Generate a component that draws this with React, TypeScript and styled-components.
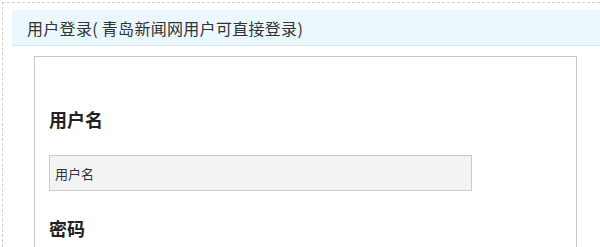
import React from 'react';
import styled, { createGlobalStyle } from 'styled-components';

const GlobalStyle = createGlobalStyle`
  html, body {
    margin: 0;
    padding: 0;
    background: #fff;
    font-family: "Noto Sans CJK SC", "Noto Sans", sans-serif;
  }
`;

const Frame = styled.div`
  margin: 2px 0 0 2px;
  border-top: 1px dashed #d0d0d0;
  border-left: 1px dashed #d0d0d0;
  padding: 7px 0 0 9px;
  height: 245px;
  box-sizing: border-box;
  overflow: hidden;
`;

const Header = styled.div`
  height: 35px;
  background: #eaf7fd;
  border-bottom: 1px solid #d6e9f1;
  padding-left: 15px;
  display: flex;
  align-items: center;
  font-size: 16px;
  color: #333;
  letter-spacing: 0.3px;
`;

const Box = styled.div`
  margin: 10px 0 0 22px;
  width: 543px;
  box-sizing: border-box;
  border: 1px solid #c8c8c8;
  padding: 50px 14px 0;
  height: 220px;
`;

const Label = styled.div<{ gap?: number }>`
  font-size: 18px;
  font-weight: 700;
  line-height: 24px;
  color: #222;
  margin-top: ${({ gap }) => gap ?? 0}px;
`;

const Input = styled.input`
  display: block;
  margin-top: 24px;
  width: 423px;
  height: 36px;
  box-sizing: border-box;
  background: #f3f3f3;
  border: 1px solid #cbcbcb;
  padding: 0 5px;
  font-family: "Noto Sans CJK SC", "Noto Sans", sans-serif;
  font-size: 13px;
  color: #333;
  outline: none;
  &::placeholder {
    color: #333;
  }
`;

export default function App() {
  return (
    <>
      <GlobalStyle />
      <Frame>
        <Header>用户登录( 青岛新闻网用户可直接登录)</Header>
        <Box>
          <Label>用户名</Label>
          <Input placeholder="用户名" />
          <Label gap={25}>密码</Label>
        </Box>
      </Frame>
    </>
  );
}
